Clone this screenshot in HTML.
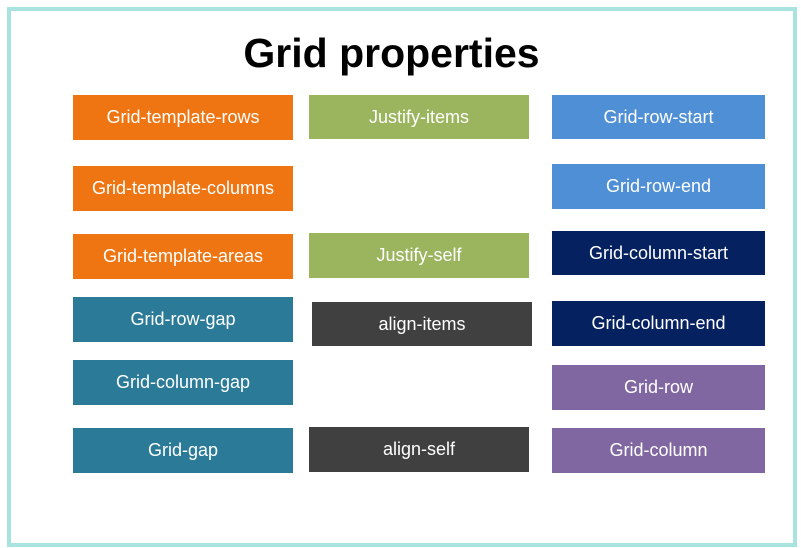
<!DOCTYPE html>
<html><head><style>
body{margin:0;width:801px;height:548px;background:#fff;position:relative;overflow:hidden;font-family:"Liberation Sans",sans-serif}
.frame{position:absolute;left:7px;top:7px;width:782px;height:532px;border:4px solid #a9e3df}
h1{position:absolute;left:0;width:783px;top:30px;margin:0;text-align:center;font-size:41px;font-weight:bold;color:#000}
.b{position:absolute;color:#fff;font-size:18px;display:flex;align-items:center;justify-content:center}
.o{background:#ee7512}.t{background:#2b7b98}.g{background:#9bb55e}.d{background:#404040}.l{background:#4f8fd6}.n{background:#062160}.p{background:#8067a2}
</style></head><body>
<div class="frame"></div>
<h1>Grid properties</h1>
<div class="b o" style="left:73px;top:95px;width:220px;height:45px">Grid-template-rows</div>
<div class="b o" style="left:73px;top:166px;width:220px;height:45px">Grid-template-columns</div>
<div class="b o" style="left:73px;top:234px;width:220px;height:45px">Grid-template-areas</div>
<div class="b t" style="left:73px;top:297px;width:220px;height:45px">Grid-row-gap</div>
<div class="b t" style="left:73px;top:360px;width:220px;height:45px">Grid-column-gap</div>
<div class="b t" style="left:73px;top:428px;width:220px;height:45px">Grid-gap</div>
<div class="b g" style="left:309px;top:95px;width:220px;height:44px">Justify-items</div>
<div class="b g" style="left:309px;top:233px;width:220px;height:45px">Justify-self</div>
<div class="b d" style="left:312px;top:302px;width:220px;height:44px">align-items</div>
<div class="b d" style="left:309px;top:427px;width:220px;height:45px">align-self</div>
<div class="b l" style="left:552px;top:95px;width:213px;height:44px">Grid-row-start</div>
<div class="b l" style="left:552px;top:164px;width:213px;height:45px">Grid-row-end</div>
<div class="b n" style="left:552px;top:231px;width:213px;height:44px">Grid-column-start</div>
<div class="b n" style="left:552px;top:301px;width:213px;height:45px">Grid-column-end</div>
<div class="b p" style="left:552px;top:365px;width:213px;height:45px">Grid-row</div>
<div class="b p" style="left:552px;top:428px;width:213px;height:45px">Grid-column</div>
</body></html>
